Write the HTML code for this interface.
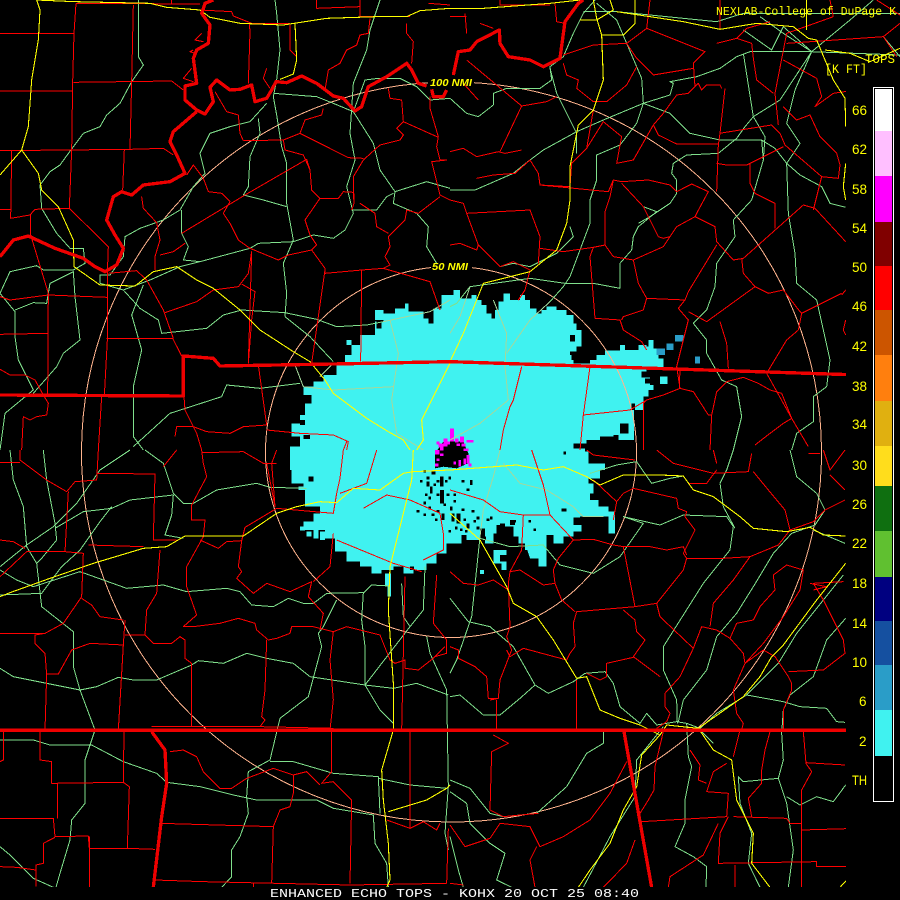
<!DOCTYPE html>
<html><head><meta charset="utf-8"><title>Enhanced Echo Tops KOHX</title>
<style>
html,body{margin:0;padding:0;background:#000}
svg{display:block}
.r,.g,.y,.m,.t,.k{fill:none;stroke-linejoin:round}
.r{stroke:#f00;stroke-width:3}
.g{stroke:#80e08c;stroke-width:3}
.m{stroke:#a4d89c;stroke-width:3}
.y{stroke:#ff0;stroke-width:3.2}
.t{stroke:#ee0000;stroke-width:10}
text{font-family:"Liberation Mono",monospace;fill:#ff0}
.l{font-family:"Liberation Sans",sans-serif;font-size:13.5px}
</style></head><body>
<svg width="900" height="900" viewBox="0 0 900 900" xmlns="http://www.w3.org/2000/svg" shape-rendering="crispEdges">
<defs><clipPath id="c"><path d="M0 0H900V87H846V887H0Z"/></clipPath></defs>
<rect width="900" height="900" fill="#000"/>
<g clip-path="url(#c)">
<!-- echo field -->
<g transform="translate(280,280) scale(.33333)">
<path fill="#40f2f0" d="M485,85V45H520V30H540V55H575V45H590V60H605V75H620V100H635V115H645V90H655V65H670V40H690V60H720V45H735V60H750V85H770V100H785V90H800V80H830V90H860V105H880V130H890V150H905V200H890V215H870V225H900V240H880V250H930V240H950V225H975V212H1020V195H1035V210H1075V195H1100V200H1105V180H1120V205H1135V235H1150V262H1100V275H1085V290H1110V315H1120V330H1105V350H1090V390H1065V370H1055V390H1062V480H1015V465H1000V470H960V480H920V490H880V505H915V515H925V550H975V570H960V595H925V610H940V640H930V660H955V680H985V695H1005V760H985V710H900V712H880V735H905V755H880V770H850V790H820V770H800V860H775V835H755V810H735V790H715V770H700V740H670V760H640V790H615V745H600V780H560V765H545V790H500V820H470V850H440V870H400V880H370V860H340V870H305V880H275V860H240V845H200V815H165V775H135V750H115V775H100V750H70V725H100V700H120V680H75V630H55V610H35V570H30V500H60V470H35V430H60V405H75V370H95V345H70V320H100V305H130V285H170V255H195V225H215V195H240V165H285V125H310V100H345V85H375V70H385V95H430V115H445V130H460V85Z"/>
<path fill="#40f2f0" d="M640,810h40v15h-20v20h20v25h-15v-20h-25zM735,790h60v70h-20v-25h-25zM315,880h18v70h-10v-30h-8zM600,870h12v12h-12zM1140,290h22v22h-22zM60,740h15v12h-15zM80,755h15v15h-15zM120,755h15v25h-15zM200,180h15v15h-15zM285,90h25v30h-25z"/>
<path fill="#000" d="M870,165h15v20h-15zM875,225h30v15h-30zM1020,430h25v30h-25zM1085,280h25v12h-25zM1095,295h15v15h-15zM290,125h15v20h-15zM60,420h15v15h-15zM70,465h20v12h-20zM55,610h15v10h-15zM85,590h15v15h-15zM650,735h20v30h-20zM690,720h15v15h-15zM930,640h20v20h-20zM845,685h15v10h-15zM800,765h20v12h-20zM440,860h20v10h-20zM390,860h12v10h-12zM440,590h8v8h-8zM455,575h12v8h-12zM430,570h8v8h-8zM420,600h8v8h-8zM440,605h8v15h-8zM450,620h8v20h-8zM460,610h8v8h-8zM435,640h8v8h-8zM445,650h8v8h-8zM470,600h8v8h-8zM480,590h10v30h-10zM495,600h8v8h-8zM505,590h8v8h-8zM470,640h8v8h-8zM480,630h12v40h-12zM500,640h8v8h-8zM520,640h8v8h-8zM490,670h8v8h-8zM510,680h8v12h-8zM520,660h8v8h-8zM430,665h8v8h-8zM445,680h8v8h-8zM455,700h8v8h-8zM470,690h8v8h-8zM410,690h8v8h-8zM485,700h8v20h-8zM515,700h8v25h-8zM530,700h12v30h-12zM545,685h8v8h-8zM550,715h8v8h-8zM560,730h8v15h-8zM580,720h8v8h-8zM590,740h8v8h-8zM600,755h8v8h-8zM610,770h8v8h-8zM570,600h8v15h-8zM560,625h8v8h-8zM545,600h8v8h-8zM620,715h8v8h-8zM660,730h15v25h-15zM700,720h8v8h-8zM630,710h8v8h-8zM575,690h8v8h-8zM590,710h8v8h-8zM525,740h8v8h-8zM540,745h8v8h-8zM555,750h8v8h-8zM850,515h8v8h-8zM745,720h8v8h-8zM760,745h8v8h-8zM430,700h8v8h-8zM465,715h8v8h-8zM505,750h8v8h-8z"/>
<path fill="#2a9dc8" d="M1130,205h25v20h-25zM1160,190h20v20h-20zM1185,165h25v20h-25zM1245,230h15v20h-15z"/>
</g>
<!-- center clutter -->
<g transform="translate(400,410) scale(.33333)">
<path fill="#000" d="M130,95L190,95L205,130L205,160L170,175L130,170L105,175L105,130Z"/>
<path fill="#f0f" d="M150,55h12v40h-12zM130,85h12v25h-12zM115,100h15v12h-15zM180,80h12v18h-12zM200,90h20v8h-20zM105,120h14v14h-14zM105,160h10v10h-10zM120,130h10v8h-10zM190,115h15v8h-15zM200,135h8v25h-8zM205,160h10v10h-10zM175,150h8v20h-8zM160,155h8v8h-8zM110,95h8v8h-8zM170,100h10v8h-10zM140,95h10v8h-10zM212,90h8v8h-8zM165,85h10v12h-10zM185,100h12v10h-12zM120,108h10v14h-10zM110,145h8v8h-8zM190,145h8v18h-8z"/>
</g>
<!-- range rings -->
<g fill="none" stroke="#ffb48e" stroke-width="1">
<circle cx="451" cy="452" r="185.5"/>
<circle cx="451.5" cy="452" r="370"/>
</g>
<rect x="428" y="79" width="46" height="8" fill="#000"/>
<rect x="431" y="263" width="41" height="9" fill="#000"/>

<!-- Q1 -->
<g transform="scale(.33333)">
<path class="g" d="M415,0L415,170L430,195L395,245L360,310L320,345L300,380L250,400L220,440L180,495L150,515L120,555L125,625L170,700L210,745L250,745L255,790L220,810L130,810L110,797L30,815L0,880L45,935L45,1010L55,1080L100,1170L15,1240L0,1350M45,930L100,908L140,910L150,850L220,815L225,890L240,1020L190,1060L170,1100L100,1180M825,0L830,40L840,150L830,240L820,290L830,345L845,440L860,490L860,610L880,720L850,790L860,880L855,950M820,280L950,290L1000,310L1060,335L1095,240L1135,235L1200,235L1250,260L1290,300L1350,295M800,310L750,365L690,380L630,400L600,460L615,520L580,560L540,630L490,660L420,685L375,710L370,770L330,825L300,825L300,850L370,870L420,925L475,960L485,1000L620,985L670,945L725,930L855,938L950,958L1010,980L1100,975L1150,965M775,355L780,400L750,470L745,560L730,585L790,600L860,620M1140,0L1110,90L1100,150L1060,250L1050,400L1065,480L1040,560L1060,640L1035,690L1000,715L940,705L880,725L775,730L750,745L600,785L540,800L450,840L370,870M1060,335L1120,430L1140,510L1185,575L1180,610L1250,640L1285,680L1280,740L1310,790M1185,575L1280,545L1350,565M1055,630L1130,630L1160,590L1180,580M855,950L930,1010L1000,1085M545,630L545,700L565,740L550,780L600,785M430,855L395,945L425,1050L400,1160L400,1310L430,1350M400,1340L510,1240L665,1190L680,1155L780,1165L900,1150"/>
<path class="m" d="M1150,965L1290,935L1350,900M885,1095L910,1160L1000,1170L1180,1160M1170,960L1195,1060L1175,1200L1190,1300L1270,1350M960,1130L1000,1090"/>
<path class="r" d="M228,10L600,12M228,10L222,100L218,245L215,450L208,625M400,15L395,245L390,447M0,100L222,100M0,273L218,273M220,247L515,243L550,270M0,452L390,448L490,445L520,465M373,448L368,570M35,452L32,655L90,645L105,628L208,625L325,740L322,820L322,1020L313,1188M92,645L92,705L145,880L143,1188M0,628L32,628M425,590L430,625L470,668L480,720L465,770L465,810M0,890L30,900L145,885L322,892M0,1003L143,1000M320,1015L518,1015L545,1068M325,820L410,812L440,840L490,930L520,1015M495,938L590,905L640,870L715,860L745,820L755,755L745,1090M725,852L765,875L755,960L745,1090M545,700L735,585L830,530L920,478L930,510L935,570L960,595L1015,595L1030,575L1060,577L1062,610M960,595L915,660L930,705L950,735L935,750L865,765L835,780L750,745L715,720L690,670L670,640L690,605L665,580L625,575L610,535L580,495L560,525M555,730L520,755L480,765M935,750L975,805L975,820L1085,810L1150,805L1290,845L1320,930M975,810L935,1090M1085,810L1082,1085M775,1095L800,1275L730,1280L690,1300L620,1295L580,1280L530,1280L525,1310M800,1290L900,1300L1000,1305L1045,1325L1040,1350M552,1190L555,1230L590,1300L605,1350M0,1108L30,1125L75,1125L105,1140L130,1185L145,1210L140,1245L110,1250L90,1260L70,1250L65,1350M305,1190L295,1350M748,70L750,95L745,250M870,75L870,150L890,170M600,30L695,35L700,48L755,70L870,70M515,0L515,12M950,0L950,25L1080,20L1080,50L1230,50M1285,10L1350,15M1080,0L1080,20M1110,55L1105,100L1080,105L1070,135L1040,150L1020,190L985,210L975,270M1220,70L1220,100L1240,125L1235,190M1290,290L1290,325L1315,410L1310,440L1320,480L1340,480L1295,485L1320,585L1350,600M1165,265L1170,295L1205,300L1210,365L1190,385L1210,405L1200,420L1140,435L1090,480L1060,530L1062,610L1055,630M1210,365L1315,412M900,400L1045,473L1090,475M730,422L850,420L900,400L915,360L965,345L970,325M850,420L855,450L910,465L930,510M645,275L680,335L715,345L720,400L730,422M1320,590L1255,640L1220,630L1215,660L1165,710L1170,740L1155,770L1170,795L1150,805M1080,610L1110,630L1125,640L1130,680L1165,700M605,100L585,120L610,125M580,150L570,155L585,160M575,205L550,235L580,245M800,205L790,235L810,265M1030,1350L1040,1325"/>
<path class="y" d="M110,0L120,30L115,120L95,240L85,380L65,450L0,525M65,450L115,520L125,570L175,620L220,720L222,800L300,855L405,858L460,815L530,800L590,840L640,865L720,930L780,990L880,1055L930,1085L975,1140L1000,1180L1100,1255L1165,1295L1210,1320L1230,1350M110,0L225,5L450,10L500,22L600,30L630,52L720,70L850,75L980,55L1130,50L1220,50L1260,32L1350,25M885,70L890,180L880,222L840,238M1350,1090L1300,1190L1265,1260L1270,1320L1250,1350"/>
</g>
<!-- Q2 -->
<g transform="translate(450,0) scale(.33333)">
<path class="g" d="M0,295L50,340L85,350L130,315L130,280L170,265L270,265L305,240L300,200L340,170L370,100L400,40L435,0M300,205L320,280L380,400L380,460M440,10L500,60L530,130L575,235L580,310L660,285L670,250L660,245L740,230L810,205L860,170L900,155L1080,155L1350,165M400,35L500,35L800,65L880,40L1350,40M0,570L75,570L190,520L240,480L280,450L380,395L460,360L580,310L660,340L720,400L810,420L935,420L975,445L1010,490L1050,525L1115,560L1140,610L1187,622M580,310L560,370L510,435L440,465L440,540L420,600L420,670L360,830L340,860L300,905M360,680L370,710L320,760L240,800L190,790L150,800M580,620L620,635L565,680L550,710L545,750L510,790L510,865L430,850L345,850L240,835L60,860L20,910L0,920M680,580L660,610L600,650L565,670M665,520L680,540L680,580M665,520L670,490L710,465L805,460L860,415L885,380L910,350L880,160M910,350L945,410L940,480L905,600L850,660L855,710L800,790L795,860L770,930L730,970L770,1020L770,1060L815,1140L860,1160L875,1250L850,1350M1085,155L1035,270L1010,370L1050,430L1010,490L1015,640L1035,760L1040,850L1100,900L1140,1080L1130,1160L1090,1190L1090,1265L1040,1300L1025,1350M910,350L990,300L1085,155L1000,80M880,90L965,150L1000,80M935,420L940,480M1085,155L1200,60L1270,0M1085,155L1000,100L930,50M1300,110L1350,170"/>
<path class="r" d="M590,85L765,155L730,190L735,260M340,165L430,135L530,130L590,85L600,0M530,130L560,175L610,225L730,205M340,190L350,225L385,240L380,265L430,305L470,305L530,255L560,200M430,330L410,445L365,490L360,560L270,555L265,520L240,480L195,520L130,525L80,535M0,455L40,445L80,470L145,455L165,460L215,450M50,180L215,318L150,455M215,318L290,305L320,290M0,600L40,610L50,640L85,735L150,800L190,785L240,810L225,870L205,900M50,640L240,630L270,710L265,790M0,735L30,730L80,750L85,735M270,745L340,755L430,742L465,735L465,635L480,590L490,540L515,545L595,540L660,555L680,575M270,555L475,575L490,540M515,550L580,620L625,710L640,715L660,710L680,680L735,650L795,680L800,725L850,780L880,775L1060,615L1095,625L1187,725M430,742L420,770L435,955L510,960L520,990L575,1025L590,1050M465,735L490,770L550,780L640,740L660,710M550,780L565,850L590,895L705,900L715,875L800,735M590,895L580,930L520,950L515,960M705,900L685,925L715,960L680,1100L690,1165L640,1185L590,1200L580,1210L580,1350M715,935L770,965L915,860L955,880L1000,870L1050,935L1055,940L1175,880M810,965L830,1030L835,1105M875,775L880,820L915,860M1055,940L1045,990L1010,1020L950,1120L1025,1255L1000,1270L960,1300L915,1335M1025,1255L1075,1340M825,265L810,400L805,435L800,575M800,490L830,495L890,495L1000,440M815,265L810,255L770,255L755,270L745,250L715,280L680,285L640,340L610,375L550,480L500,490L510,435L515,410L460,365L410,445M610,375L625,405L680,432L805,432M808,400L965,375L990,400L1005,435L1115,530L1165,535L1170,495L1160,460L1110,410L1080,345L1040,360L1000,320M1115,530L1090,630M900,490L900,550L915,580L975,610L975,685M680,575L725,552L775,575L740,640L735,650M1000,180L1100,235L1115,290L1095,320L1150,280L1230,268M1010,100L975,280L985,375M800,130L860,115L890,85L960,65M860,115L905,130L910,175L920,240L970,280M1010,100L1150,50M1010,130L1300,110L1350,70M1280,0L1350,45M1300,110L1340,170M690,1105L688,1165M780,1350L785,1245L800,1175L830,1145L880,1132L925,1150L960,1170L995,1180L1025,1255M690,1165L730,1175L775,1245L785,1245M150,0L150,15L300,15M315,10L320,65L345,70M45,40L50,100M0,50L50,50M90,70L130,85M810,0L810,85M1150,50L1140,0M1187,870L1175,885M1187,960L1180,990L1187,1005"/>
<path class="m" d="M0,1000L30,950L60,860M130,900L170,1000L165,1100L175,1200L90,1270L0,1320M170,1060L240,960L300,905"/>
<path class="r" d="M85,300L40,250M215,1100L190,1200L180,1220L160,1290L150,1350M420,1100L400,1245L390,1350M400,1245L540,1230L590,1200"/>
<path class="y" d="M0,25L100,25L300,10L390,0M390,60L440,60L490,30L480,0M430,0L440,55L455,105L460,240L430,330L385,375L360,500L360,600L350,670L320,750L240,815L100,850L40,1000L0,1085M455,105L520,105L555,70L555,0M500,35L700,65L810,88L920,70L1030,80L1075,115L1100,120L1150,240L1185,295L1187,380M1125,150L1200,160L1260,185L1350,145M1070,0L1070,90M1187,490L1180,560L1187,600"/>
</g>
<!-- Q3 -->
<g transform="translate(0,450) scale(.33333)">
<path class="g" d="M130,0L140,90L165,220L170,270L125,325L110,340L125,470L220,545L220,650L240,720L285,840L255,930L255,1060L215,1110L210,1170L180,1270L168,1312M30,0L40,90L70,170L80,290L110,340M390,0L300,60L230,160L160,230L80,285L0,350M435,0L490,40L520,130L550,160L580,160L650,120L770,100L810,112L920,115M520,135L390,150L335,175L250,185L165,235M335,170L300,215L240,300L185,350L125,430L0,435M520,135L515,195L495,255L550,265M0,360L50,390L100,410L240,365L380,415L490,405L560,425L680,415L720,425L755,465L820,470L865,445L910,460L940,460L980,430L1090,428L1085,510L1095,590L1095,705L1140,780L1180,820M1170,408L1115,405L1090,430M1010,450L970,530L955,550L965,590L925,740L840,805L810,930L745,965L740,1040L745,1090L720,1160L695,1200L695,1280L665,1312M0,655L40,680L240,720L290,710L355,682L400,690L470,690L575,645L595,632L670,640L740,610L800,625L880,640L930,680L1095,705L1180,715L1250,700L1345,735M1095,705L1230,530L1270,480L1275,350M1205,400L1210,500L1230,530M1280,560L1290,610L1340,720L1345,1010L1335,1150L1345,1200M0,870L100,870L150,885L275,885L370,935L470,970L500,997L600,1010L700,1035L770,1050L950,1050L1000,1075L1120,1095L1125,1180L1160,1240L1165,1312M810,935L880,935L1000,970L1135,980L1140,1090M1135,985L1230,1005L1340,1015M0,1190L30,1215L100,1285L160,1312"/>
<path class="r" d="M60,0L60,30L140,90L200,125L225,95L290,90L295,0M0,38L60,38M290,70L465,72L460,270L530,270M205,125L195,305L80,305L0,380M195,305L250,310L245,440L190,520L135,550L0,550M265,285L430,290M135,550L105,555L105,580L135,610L140,675L135,840M140,672L175,672L215,600L270,580L370,585L355,840M375,510L370,585M245,445L275,465L300,500L370,510M375,555L435,555L460,580L515,580L540,560L555,570L555,625L575,640L575,830M435,555L440,480L470,430L480,300M605,0L610,40L620,80L575,165L575,210L615,210L610,260L560,350L560,410L590,495L550,530L580,530L660,520L715,505L765,520L770,540L805,570L830,565L870,550L875,530L940,530L1000,545L1040,530L1140,555L1170,630L1185,640L1215,630L1215,655L1255,660L1300,625L1335,590M605,8L730,5L790,40L830,40M800,570L795,720L785,800L795,810L780,830M455,830L780,830L1000,835M1000,545L990,630L1000,750L990,840M600,270L655,295L680,275L725,272L715,350L725,365L710,385L760,430L800,400L870,425L935,395L925,440L970,490L960,540M725,272L735,232L830,175L1000,190L1010,130L1020,85L1030,0M940,395L990,350L1000,250M1010,270L1180,340L1265,365M1205,840L1215,380M1230,845L1230,1135L1270,1115L1310,1140L1320,1120M995,845L995,965L965,1000L1000,995L1055,1050L1050,1300M510,905L550,900L590,920L610,965L660,1015L695,1015L740,985L820,955L880,975L880,1030L870,1070L840,1080L820,1130L815,1300M880,975L920,965L960,1005M820,1130L480,1120M120,845L120,930L155,935L155,1000L370,997L372,845M370,997L388,1010L382,1195L268,1195L265,1158L165,1160L160,1105L0,1105M172,1000L172,1105M165,1162L130,1180L130,1240L108,1245L108,1310M268,1160L268,1312M382,1195L465,1198M0,1250L50,1252L108,1260M465,1290L610,1295L1050,1305L1340,1300M10,845L10,930L0,935M1340,1300L1345,1135M760,1300L760,1312M1160,1110L1230,1135M1310,375L1300,520L1340,570L1340,610L1305,620M0,270L40,275L75,295M490,50L530,0M1090,175L1160,135L1230,150L1320,190L1330,250L1330,300L1270,330M800,40L825,170L815,40L830,0M1130,0L1100,100L1020,130"/>
<path class="y" d="M0,440L30,428L150,385L280,340L430,295L500,290L555,258L730,258L830,190L890,170L960,155L1010,158L1060,115L1140,120L1210,70L1240,65L1350,60M1240,0L1235,90L1170,350L1165,480L1180,700L1180,840L1145,960L1150,1050L1165,1180L1170,1290L1160,1312M1165,1085L1280,1050L1340,1015L1350,1005"/>
</g>
<!-- Q4 -->
<g transform="translate(450,450) scale(.33333)">
<path class="g" d="M0,445L55,515L120,530L190,590L255,705L210,745L150,795L100,795L30,735L0,740M255,705L295,730L370,695L405,670L465,665L490,700L510,770L570,820L590,790L620,825L680,815M90,260L65,500L20,630L0,670M90,265L180,290L280,285L330,345L430,370L510,320L580,220L520,200L630,225L700,195L830,200L850,230L840,300L760,400L640,590L640,660L680,750L682,820M810,100L820,170L855,235M810,100L830,60L850,0M1020,0L1040,80L1100,130L1125,180L1095,225L1025,250L970,310L910,410L860,490L800,560L770,660L700,750L685,815M1090,240L1185,280M1180,375L1120,450L1040,550L985,640L890,735L800,790L750,835L710,820L680,815M890,735L1000,755L1050,770L1130,775L1160,815L1185,817M1187,505L1130,570L1090,680L1020,735L1000,780L995,850L1000,930L985,985L1010,1060L1030,1200L1015,1312M985,985L880,995L865,980L870,1060L905,1150L895,1240L930,1312M1187,1005L1150,1055L1100,1040L1050,1065L1010,1040M710,820L715,920L725,950L705,1050L705,1120L675,1190L730,1220L770,1250L768,1312M640,830L560,930L555,1040L480,1160L400,1312M460,840L460,880L410,910L350,1010L260,1090L160,1100L120,1090L60,1015L0,990M0,1025L50,1060L60,1120L120,1180L165,1210L140,1290L185,1312M0,1160L25,1260L40,1312M420,70L500,45L560,35L605,100L660,85L700,78M745,835L790,880"/>
<path class="m" d="M150,0L130,80L100,180L90,260M160,40L210,100L290,120L370,170L400,200L460,200"/>
<path class="r" d="M410,0L430,15L555,30M620,0L670,40L790,70L895,65L905,10M790,0L800,40M910,65L955,120L1005,180L1020,240M1075,10L1110,10M1120,0L1140,60L1185,0M1140,75L1185,120M715,100L770,100L800,60M430,90L500,155L520,130L550,115L680,145L685,175L710,185L705,200L735,240L700,310L710,325L820,325L900,320L985,285L1020,240L1090,215L1125,180L1185,150M500,155L490,210M710,325L700,360L620,460L555,470L520,290L600,290L650,300L700,290L710,315M555,470L380,485L370,520L375,590L360,610L350,630L220,595L180,620L170,600M520,290L490,285L430,268L370,270L325,325L310,360L315,400L335,450L375,485M180,365L210,360L280,405L315,400M180,365L175,400L180,530L170,560L185,600L150,690L145,745L120,750M0,365L40,400L85,405L130,390L175,420M140,750L140,840M380,690L380,840M0,590L25,600L25,625L75,650L110,680L115,745L140,745M620,460L630,500L730,595L690,680L645,730L645,770L660,790L650,815L620,835M520,480L555,510L560,545L585,570L550,620L630,680M550,622L470,640L470,680L450,690L410,670M755,530L730,595M755,530L800,540L840,565L880,610L885,640L940,600L975,620L1015,680L1025,700L1025,720L1000,780L1000,840M1015,665L1120,660L1185,610L1180,570L1120,450L1090,400L1180,395M840,565L860,520L910,510L930,470L975,420L970,375L1010,345L1060,360L1050,420L1000,500L940,580L885,640L850,720L860,790L880,820L875,840M780,530L790,460L850,390L900,320M1060,845L1068,940L1085,965L1055,1020L1055,1312M1068,938L1185,945M1055,1140L1225,1135L1300,1100L1320,1085M1300,1105L1310,1150L1350,1190M1225,1135L1235,1195L1270,1195L1272,1312M1272,1285L1345,1285M850,1100L1010,1105L1020,1120L1055,1120M830,940L790,965L770,1025L835,1030L830,1100L575,1115M835,1100L810,1150L805,1240L1100,1235L1100,1250L1270,1250M805,1120L760,1215L660,1280L655,1312M855,1245L855,1312M870,840L850,920M960,845L945,900L935,960L935,1000L895,1045L905,1100M640,845L615,950L612,1020L595,1050L570,1090M530,935L480,1030L420,1110L340,1160L270,1190L240,1130L150,1120L120,1165L45,1190L0,1125M260,1190L240,1230L255,1312M555,1170L530,1240L460,1312M720,900L750,945L745,990L770,1000M0,1300L40,1305M130,855L175,880L125,905L120,1080L160,1100L265,1090M1080,400L1130,410L1090,420M245,0L280,105L300,195L370,270M0,120L100,150L150,185L220,195L300,195M220,195L215,300L180,365"/>
<path class="y" d="M0,60L200,45L280,60L340,50L410,80L450,105L520,75L630,75L700,78L730,120L790,140L870,200L910,235L1010,245L1080,232L1120,255L1187,258M0,190L90,270L170,410L190,460L260,500L310,570L380,685L410,680L450,780L510,805L570,825L630,855L650,825L745,835L790,900L845,930L860,1050L910,1150L905,1240L960,1312M745,835L880,740L930,680L965,620L1000,585L1100,450L1187,340M630,855L575,915L560,1010L520,1080L480,1180L420,1260L385,1312M1195,1250L1195,1285L1170,1312"/>
</g>
<!-- thick boundaries -->
<g transform="scale(.33333)">
<path class="t" d="M640,0L615,10L605,40L630,75L625,130L590,150L580,175L590,250L555,258L555,300L590,330L615,342L640,305L630,262L650,240L690,270L720,268L755,255L765,305L800,295L815,270L828,245L860,248L905,228L950,250L1000,288L1030,295L1065,333L1085,320L1105,260L1160,230L1190,210L1220,190L1235,210L1255,250L1280,258M590,335L520,395L510,425L530,465L555,520L510,545L430,555L395,585L365,575L340,590L320,660L345,705L370,745L350,795L315,815L285,800L250,775L165,745L85,708L40,720L0,770M1295,268L1300,290L1330,290L1340,270"/>
<path class="t" d="M1360,225L1375,155L1410,150L1430,125L1498,90L1500,130L1525,170L1590,180L1630,200L1680,175L1695,65L1735,10L1750,0"/>
<path class="t" d="M0,1185L550,1188L550,1068L640,1075L660,1098L1000,1092L1350,1085L2640,1127"/>
<path class="t" d="M0,2191L2540,2191"/>
<path class="t" d="M455,2195L495,2250L500,2350L485,2450L460,2662M1872,2195L1955,2662"/>
</g>
</g>
<!-- legend -->
<rect x="873.5" y="87.5" width="20" height="714" fill="#000" stroke="#fff" stroke-width="1"/>
<rect x="875" y="89" width="17" height="42" fill="#fff"/>
<rect x="875" y="131" width="17" height="45" fill="#ffbfff"/>
<rect x="875" y="176" width="17" height="46" fill="#f0f"/>
<rect x="875" y="222" width="17" height="44" fill="#800000"/>
<rect x="875" y="266" width="17" height="44" fill="#f00"/>
<rect x="875" y="310" width="17" height="45" fill="#cc5500"/>
<rect x="875" y="355" width="17" height="46" fill="#ff7f0e"/>
<rect x="875" y="401" width="17" height="45" fill="#e0b010"/>
<rect x="875" y="446" width="17" height="40" fill="#ffdd1c"/>
<rect x="875" y="486" width="17" height="45" fill="#0f6f10"/>
<rect x="875" y="531" width="17" height="46" fill="#60c030"/>
<rect x="875" y="577" width="17" height="44" fill="#000080"/>
<rect x="875" y="621" width="17" height="44" fill="#1550a0"/>
<rect x="875" y="665" width="17" height="45" fill="#2a9dc8"/>
<rect x="875" y="710" width="17" height="46" fill="#40f2f0"/>
<g shape-rendering="auto">
<g class="l">
<text class="l" x="852" y="115">66</text>
<text class="l" x="852" y="154">62</text>
<text class="l" x="852" y="194">58</text>
<text class="l" x="852" y="233">54</text>
<text class="l" x="852" y="272">50</text>
<text class="l" x="852" y="311">46</text>
<text class="l" x="852" y="351">42</text>
<text class="l" x="852" y="391">38</text>
<text class="l" x="852" y="429">34</text>
<text class="l" x="852" y="470">30</text>
<text class="l" x="852" y="509">26</text>
<text class="l" x="852" y="548">22</text>
<text class="l" x="852" y="588">18</text>
<text class="l" x="852" y="628">14</text>
<text class="l" x="852" y="667">10</text>
<text class="l" x="859" y="706">6</text>
<text class="l" x="859" y="746">2</text>
<text class="l" x="852" y="785" textLength="15" lengthAdjust="spacingAndGlyphs">TH</text>
</g>
<text x="716" y="15" font-size="11.5" textLength="180" lengthAdjust="spacingAndGlyphs">NEXLAB-College of DuPage K</text>
<text x="865" y="63" font-size="12.5" textLength="30" lengthAdjust="spacingAndGlyphs">TOPS</text>
<text x="825" y="73" font-size="12.5" textLength="42" lengthAdjust="spacingAndGlyphs">[K FT]</text>
<text x="430" y="86" style="font-family:'Liberation Sans',sans-serif;font-style:italic;font-weight:bold" font-size="10.5" textLength="42" lengthAdjust="spacingAndGlyphs">100 NMI</text>
<text x="432" y="270" style="font-family:'Liberation Sans',sans-serif;font-style:italic;font-weight:bold" font-size="10.5" textLength="36" lengthAdjust="spacingAndGlyphs">50 NMI</text>
<text x="270" y="897" font-size="11.5" style="fill:#fff" textLength="369" lengthAdjust="spacingAndGlyphs">ENHANCED ECHO TOPS - KOHX 20 OCT 25 08:40</text>
</g>
</svg>
</body></html>
